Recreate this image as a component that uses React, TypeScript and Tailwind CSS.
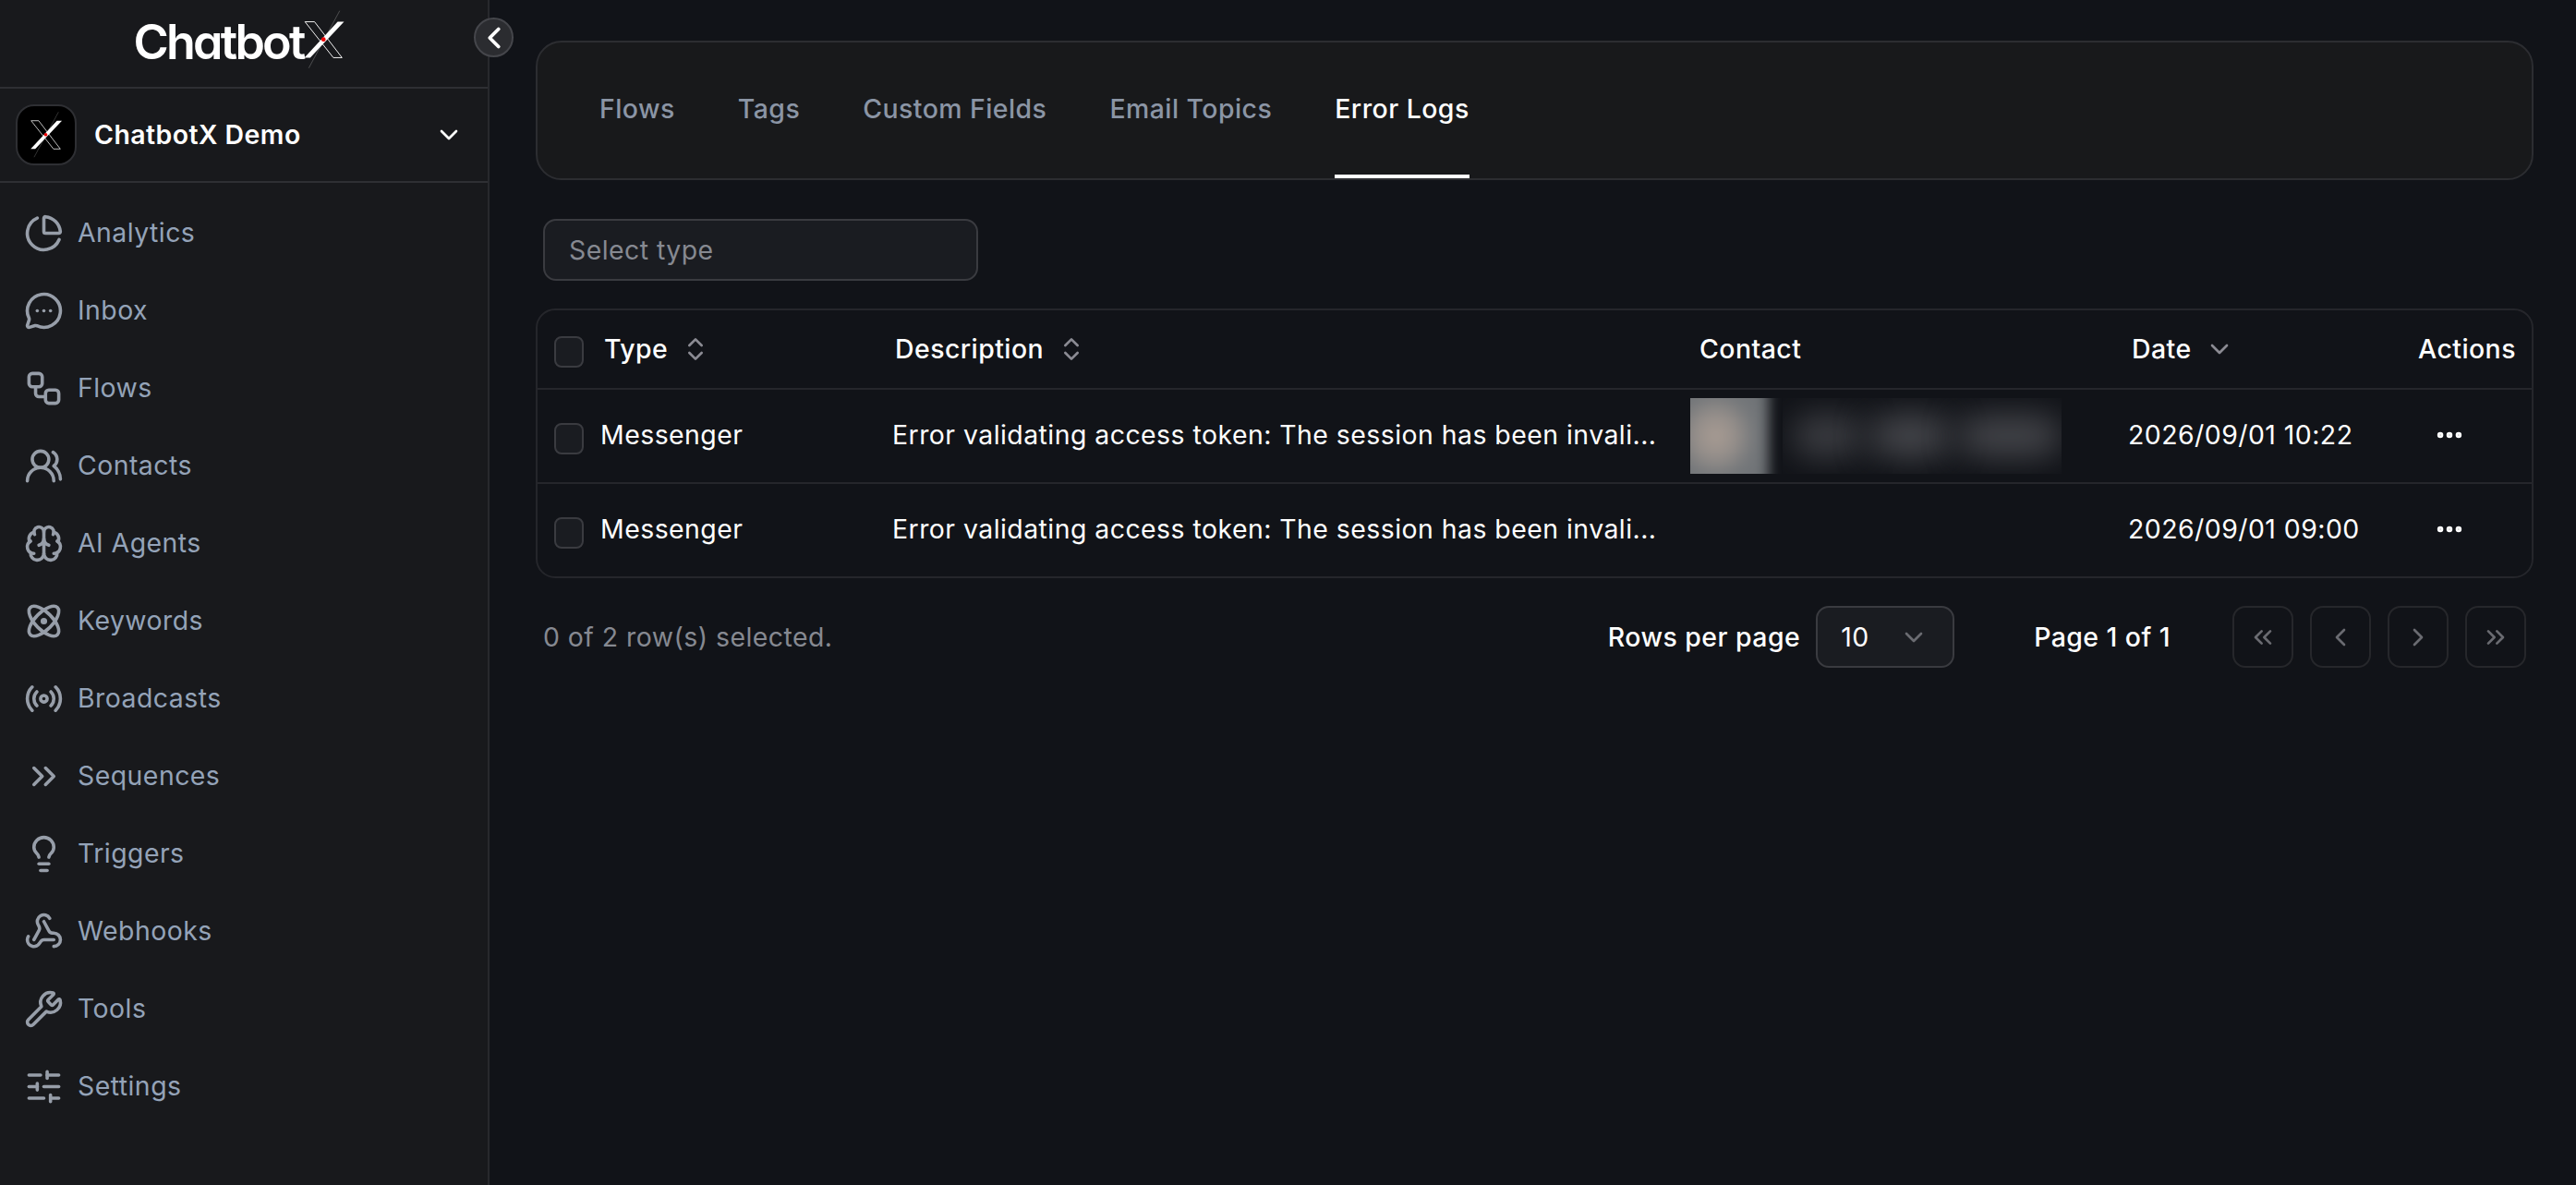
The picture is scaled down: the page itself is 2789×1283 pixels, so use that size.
import {
  Atom,
  Brain,
  ChartPie,
  ChevronDown,
  ChevronLeft,
  ChevronRight,
  ChevronsLeft,
  ChevronsRight,
  ChevronsUpDown,
  Ellipsis,
  Lightbulb,
  MessageCircleMore,
  Radio,
  SlidersHorizontal,
  UsersRound,
  Webhook,
  Workflow,
  Wrench,
} from "lucide-react";
import type { ReactNode } from "react";

const navItems = [
  { label: "Analytics", icon: ChartPie },
  { label: "Inbox", icon: MessageCircleMore },
  { label: "Flows", icon: Workflow },
  { label: "Contacts", icon: UsersRound },
  { label: "AI Agents", icon: Brain },
  { label: "Keywords", icon: Atom },
  { label: "Broadcasts", icon: Radio },
  { label: "Sequences", icon: ChevronsRight },
  { label: "Triggers", icon: Lightbulb },
  { label: "Webhooks", icon: Webhook },
  { label: "Tools", icon: Wrench },
  { label: "Settings", icon: SlidersHorizontal },
];

const tabs = ["Flows", "Tags", "Custom Fields", "Email Topics", "Error Logs"];

const rowGrid = "grid grid-cols-[68px_316px_864px_474px_314px_1fr] items-center";

// the X of the logo, coordinates taken from the wordmark
function XMark({ className }: { className: string }) {
  return (
    <svg viewBox="0 0 150 210" className={className} fill="none">
      <path d="M127 5 20 203" stroke="#8a8a8a" strokeWidth="1.5" />
      <path d="M7 43h33l95 124h-30z" stroke="#fff" strokeWidth="3" strokeLinejoin="round" />
      <path d="M142 43h-22L5 167h20z" fill="#fff" />
      <circle cx="71" cy="104" r="7.5" fill="#f00000" />
    </svg>
  );
}

function Checkbox({ className }: { className: string }) {
  return (
    <div className={`ml-[18px] h-[34px] w-[32px] rounded-[8px] border-2 border-[#3a3b40] bg-[#1a1c21] ${className}`} />
  );
}

function HeaderLabel({ children, className }: { children: ReactNode; className: string }) {
  return <div className={`flex items-center gap-[14px] font-medium text-white ${className}`}>{children}</div>;
}

function PageButton({ children }: { children: ReactNode }) {
  return (
    <button className="flex h-[67px] w-[66px] items-center justify-center rounded-[14px] border-2 border-[#26272b] text-[#6a6b71]">
      {children}
    </button>
  );
}

function BlurredContact() {
  return (
    <div className="flex h-[82px] items-stretch">
      <div className="h-[82px] w-[100px] overflow-hidden">
        <div className="-mt-[20px] -ml-[14px] h-[122px] w-[99px] bg-[radial-gradient(ellipse_at_42%_50%,#a99c93_0%,#948e8a_28%,#74777a_52%,#6a6e72_100%)] blur-[7px]" />
      </div>
      <div className="flex h-[82px] w-[302px] items-center gap-[8px] overflow-hidden pl-[10px]">
        <div className="h-[44px] w-[76px] shrink-0 rounded-full bg-[#3f4045] blur-[18px]" />
        <div className="h-[46px] w-[88px] shrink-0 rounded-full bg-[#47484d] blur-[18px]" />
        <div className="h-[44px] w-[112px] shrink-0 rounded-full bg-[#46474c] blur-[18px]" />
      </div>
    </div>
  );
}

function LogRow({ date, contact }: { date: string; contact?: boolean }) {
  return (
    <div className={`${rowGrid} h-[102px] border-t-2 border-[#25262b] pb-[3px] text-white`}>
      <Checkbox className="mt-[9px]" />
      <div>Messenger</div>
      <div className="truncate">Error validating access token: The session has been invali...</div>
      <div className="mt-[3px]">{contact && <BlurredContact />}</div>
      <div>{date}</div>
      <div className="pl-[17px] text-white">
        <Ellipsis size={34} strokeWidth={2.6} />
      </div>
    </div>
  );
}

export default function App() {
  return (
    <div className="relative flex h-screen w-full overflow-hidden bg-[#111318] font-['Inter',sans-serif] text-[28.44px] leading-[40px] tracking-[0.45px]">
      <aside className="flex h-full w-[530px] shrink-0 flex-col border-r-2 border-[#28292d] bg-[#18191c]">
        <div className="flex h-[96px] items-start justify-center border-b-2 border-[#2e2f33] pr-[8px]">
          <span className="mt-[16px] text-[52px] leading-[60px] font-semibold tracking-[-2.8px] text-white [font-feature-settings:'cv11']">
            Chatbot
          </span>
          <XMark className="mt-[10px] h-[66px] w-[47px]" />
        </div>
        <div className="flex h-[102px] items-center gap-[19px] border-b-2 border-[#2e2f33] pr-[26px] pl-[17px]">
          <div className="flex h-[66px] w-[66px] items-center justify-center rounded-[20px] border-2 border-[#2e2f33] bg-black">
            <XMark className="h-[52px] w-[37px]" />
          </div>
          <span className="flex-1 font-semibold text-white">ChatbotX Demo</span>
          <ChevronDown size={32} className="text-white" />
        </div>
        <nav className="flex flex-col pt-[12px]">
          {navItems.map(({ label, icon: Icon }) => (
            <div key={label} className="flex h-[84px] items-center gap-[15px] pl-[26px] text-[#94a3b8]">
              <Icon size={43} strokeWidth={2} className="text-[#979ea9]" />
              <span>{label}</span>
            </div>
          ))}
        </nav>
      </aside>

      <button className="absolute top-[19px] left-[513px] flex h-[43px] w-[43px] items-center justify-center rounded-full border-2 border-[#45464b] bg-[#2b2c30] text-white">
        <ChevronLeft size={38} strokeWidth={2.4} />
      </button>

      <main className="flex-1 pt-[44px] pr-[46px] pl-[50px]">
        <div className="flex h-[151px] gap-[68px] rounded-[28px] border-2 border-[#2c2d31] bg-[#18191b] pl-[67px]">
          {tabs.map((tab) => (
            <div
              key={tab}
              className={
                tab === "Error Logs"
                  ? "flex h-full items-center border-b-4 border-white font-medium text-white"
                  : "flex h-full items-center border-b-4 border-transparent font-medium text-[#8b95a5]"
              }
            >
              {tab}
            </div>
          ))}
        </div>

        <div className="mt-[42px] ml-[8px] flex h-[67px] w-[471px] items-center rounded-[14px] border-2 border-[#3a3b40] bg-[#1a1c21] pl-[26px] text-[#868991]">
          Select type
        </div>

        <div className="mt-[30px] rounded-[21px] border-2 border-[#25262b]">
          <div className={`${rowGrid} h-[84px]`}>
            <Checkbox className="mt-[6px]" />
            <HeaderLabel className="pl-[4px]">
              Type
              <ChevronsUpDown size={32} className="text-[#8b8b93]" />
            </HeaderLabel>
            <HeaderLabel className="pl-[3px]">
              Description
              <ChevronsUpDown size={32} className="text-[#8b8b93]" />
            </HeaderLabel>
            <HeaderLabel className="pl-[10px]">Contact</HeaderLabel>
            <HeaderLabel className="pl-[4px]">
              Date
              <ChevronDown size={32} className="text-[#8b8b93]" />
            </HeaderLabel>
            <HeaderLabel className="">Actions</HeaderLabel>
          </div>
          <LogRow date="2026/09/01 10:22" contact />
          <LogRow date="2026/09/01 09:00" />
        </div>

        <div className="mt-[30px] flex h-[67px] items-center justify-between pr-[8px] pl-[8px]">
          <span className="text-[#868991]">0 of 2 row(s) selected.</span>
          <div className="flex items-center">
            <span className="font-medium text-white">Rows per page</span>
            <div className="ml-[17px] flex h-[67px] w-[150px] items-center justify-between rounded-[14px] border-2 border-[#3a3b40] bg-[#1a1c21] pr-[26px] pl-[25px] text-white">
              10
              <ChevronDown size={32} className="text-[#6a6b71]" />
            </div>
            <span className="ml-[86px] font-medium text-white">Page 1 of 1</span>
            <div className="ml-[67px] flex gap-[18px]">
              <PageButton>
                <ChevronsLeft size={32} />
              </PageButton>
              <PageButton>
                <ChevronLeft size={32} />
              </PageButton>
              <PageButton>
                <ChevronRight size={32} />
              </PageButton>
              <PageButton>
                <ChevronsRight size={32} />
              </PageButton>
            </div>
          </div>
        </div>
      </main>
    </div>
  );
}
